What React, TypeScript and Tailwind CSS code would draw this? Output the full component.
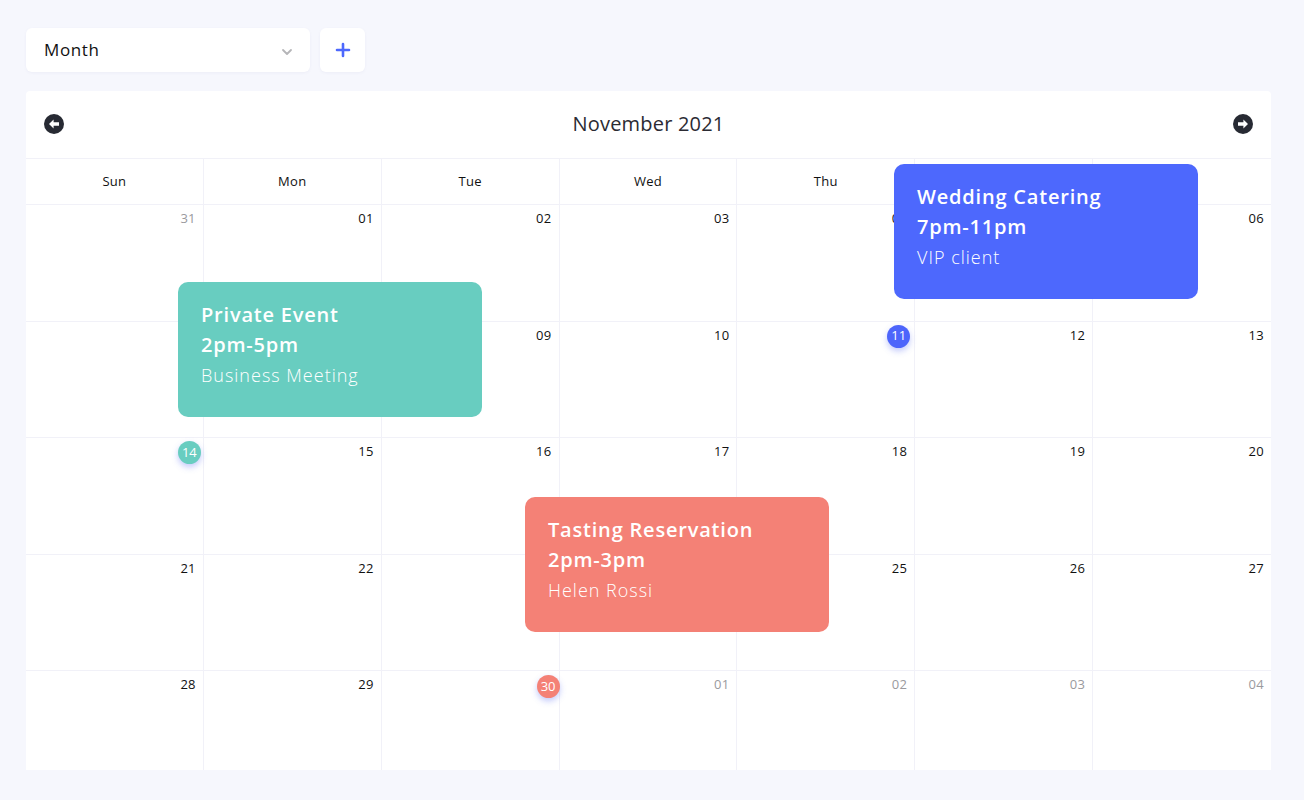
import React from 'react';

interface CalEvent {
  title: string;
  time: string;
  note: string;
  color: string;
  pos: string;
}

interface DayCell {
  day: string;
  muted?: boolean;
  badge?: string;
}

const weekdays = ['Sun', 'Mon', 'Tue', 'Wed', 'Thu', 'Fri', 'Sat'];

// badge holds colour + a small nudge so the dot sits where the reference has it
const weeks: DayCell[][] = [
  [{ day: '31', muted: true }, { day: '01' }, { day: '02' }, { day: '03' }, { day: '04' }, { day: '05' }, { day: '06' }],
  [{ day: '07' }, { day: '08' }, { day: '09' }, { day: '10' }, { day: '11', badge: 'bg-[#4d65fb] -mr-[3px]' }, { day: '12' }, { day: '13' }],
  [{ day: '14', badge: 'bg-[#68cdc0] -mr-[5px]' }, { day: '15' }, { day: '16' }, { day: '17' }, { day: '18' }, { day: '19' }, { day: '20' }],
  [{ day: '21' }, { day: '22' }, { day: '23' }, { day: '24' }, { day: '25' }, { day: '26' }, { day: '27' }],
  [{ day: '28' }, { day: '29' }, { day: '30', badge: 'bg-[#f48176] -mr-[8px] mt-[1px]' }, { day: '01', muted: true }, { day: '02', muted: true }, { day: '03', muted: true }, { day: '04', muted: true }],
];

const events: CalEvent[] = [
  { title: 'Private Event', time: '2pm-5pm', note: 'Business Meeting', color: 'bg-[#68cdc0]', pos: 'left-[152px] top-[191px]' },
  { title: 'Wedding Catering', time: '7pm-11pm', note: 'VIP client', color: 'bg-[#4d68fd]', pos: 'left-[868px] top-[73px]' },
  { title: 'Tasting Reservation', time: '2pm-3pm', note: 'Helen Rossi', color: 'bg-[#f48176]', pos: 'left-[499px] top-[406px]' },
];

const CircleArrow = ({ dir }: { dir: 'left' | 'right' }) => (
  <svg width="20" height="20" viewBox="0 0 20 20">
    <circle cx="10" cy="10" r="10" fill="#272a33" />
    <g transform={dir === 'right' ? 'rotate(180 10 10)' : undefined}>
      <path d="M5 10 L9.6 5.6 L9.6 8.3 L15 8.3 L15 11.7 L9.6 11.7 L9.6 14.4 Z" fill="#fff" />
    </g>
  </svg>
);

export default function App() {
  return (
    <div className="min-h-[800px] bg-[#f6f7fd] pl-[26px] pt-[28px] font-['Open_Sans',sans-serif] text-[#111]">
      {/* toolbar */}
      <div className="flex gap-[10px]">
        <div className="flex h-[44px] w-[284px] items-center justify-between rounded-[6px] bg-white pl-[18px] pr-[16px] shadow-[0_1px_3px_rgba(80,90,160,0.06)]">
          <span className="text-[17px] tracking-[0.6px] text-[#111]">Month</span>
          <svg width="14" height="14" viewBox="0 0 14 14" className="mt-[3px]">
            <path d="M3 5 L7 9 L11 5" stroke="#b5b5b8" strokeWidth="1.8" fill="none" strokeLinecap="round" strokeLinejoin="round" />
          </svg>
        </div>
        <div className="flex h-[44px] w-[45px] items-center justify-center rounded-[6px] bg-white shadow-[0_1px_3px_rgba(80,90,160,0.06)]">
          <svg width="16" height="16" viewBox="0 0 16 16">
            <path d="M8 2 V14 M2 8 H14" stroke="#4d68fd" strokeWidth="2.6" strokeLinecap="round" />
          </svg>
        </div>
      </div>

      {/* calendar card */}
      <div className="relative mt-[19px] h-[679px] w-[1245px] overflow-hidden rounded-t-[4px] bg-white">
        <div className="flex h-[67px] items-center justify-between px-[18px] pb-[2px]">
          <CircleArrow dir="left" />
          <span className="text-[20px] tracking-[0.2px] text-[#2b2b33]">November 2021</span>
          <CircleArrow dir="right" />
        </div>

        <div className="grid grid-cols-7 border-t border-[#f1f1f8]">
          {weekdays.map((d, i) => (
            <div
              key={d}
              className={`flex h-[45px] items-center justify-center text-[13px] tracking-[0.3px] text-[#111] ${i < 6 ? 'border-r border-[#f1f1f8]' : ''}`}
            >
              {d}
            </div>
          ))}
        </div>

        {weeks.map((week, wi) => (
          <div key={wi} className="grid h-[116.5px] grid-cols-7 border-t border-[#f1f1f8]">
            {week.map((cell, ci) => (
              <div
                key={ci}
                className={`flex justify-end pr-[7px] pt-[3px] ${ci < 6 ? 'border-r border-[#f1f1f8]' : ''}`}
              >
                {cell.badge ? (
                  <span
                    className={`flex h-[23px] w-[23px] items-center justify-center self-start rounded-full text-[13px] text-white shadow-[0_3px_6px_rgba(80,100,240,0.35)] ${cell.badge}`}
                  >
                    {cell.day}
                  </span>
                ) : (
                  <span className={`text-[13px] leading-[20px] tracking-[0.3px] ${cell.muted ? 'text-[#9a9a9e]' : 'text-[#111]'}`}>
                    {cell.day}
                  </span>
                )}
              </div>
            ))}
          </div>
        ))}

        {events.map(ev => (
          <div
            key={ev.title}
            className={`absolute h-[135px] w-[304px] rounded-[10px] px-[23px] pt-[18px] text-white ${ev.color} ${ev.pos}`}
          >
            <div className="text-[20px] font-semibold leading-[30px] tracking-[0.8px]">{ev.title}</div>
            <div className="text-[20px] font-semibold leading-[30px] tracking-[0.8px]">{ev.time}</div>
            <div className="text-[18px] font-light leading-[30px] tracking-[1px]">{ev.note}</div>
          </div>
        ))}
      </div>
    </div>
  );
}
